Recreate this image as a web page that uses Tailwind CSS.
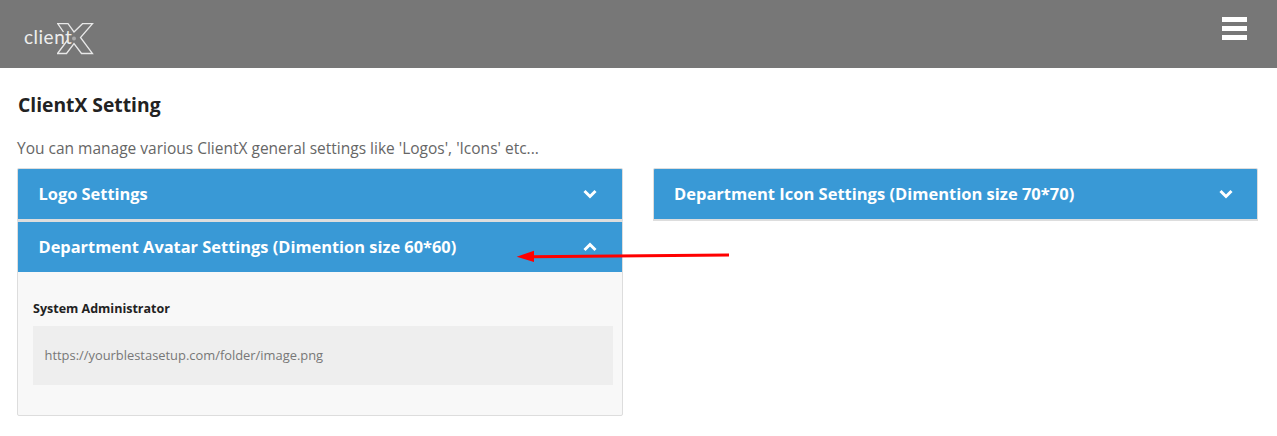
<!doctype html>
<html lang="en">
    <head>
        <meta charset="UTF-8" />
        <meta name="viewport" content="width=device-width, initial-scale=1.0" />
        <title>ClientX Setting</title>
        <script src="https://cdn.jsdelivr.net/npm/@tailwindcss/browser@4"></script>
    </head>
    <body class="relative h-[436px] overflow-hidden bg-white font-['Open_Sans',sans-serif] text-[#222]">
        <!-- Header -->
        <header class="flex h-[68px] items-start justify-between bg-[#777777] pl-6 pr-[30px]">
            <div class="relative mt-[23px] h-[32px] w-[72px]">
                <span class="absolute left-0 top-[2px] font-['Lato',sans-serif] text-[19px] font-normal leading-[24px] tracking-[0.5px] text-[#eeeeee]">client</span>
                <svg class="absolute left-[33px] top-0" width="37" height="32" viewBox="0 0 37 32" fill="none" stroke="#e8e8e8" stroke-width="1.3">
                    <path d="M6.5 9 L0.7 0.7 L11 0.7 L17 9 L25.5 0.7 L35.5 0.7 L23.5 14.5 L35.5 30.5 L24.5 30.5 L17 20.5 L9.5 30.5 L0.5 30.5 L11 16.5" />
                    <circle cx="17" cy="15.5" r="2" fill="#a8a8a8" stroke="none" />
                </svg>
            </div>
            <div class="mt-[17px] flex w-[25px] flex-col gap-[4px]">
                <span class="h-[5px] bg-white"></span>
                <span class="h-[5px] bg-white"></span>
                <span class="h-[5px] bg-white"></span>
            </div>
        </header>

        <main class="px-[17px]">
            <h1 class="mt-[24px] pl-px text-[19.3px] font-bold leading-[26px] text-[#222]">ClientX Setting</h1>
            <p class="mt-[18px] text-[15.5px] leading-[24px] text-[#666]">You can manage various ClientX general settings like 'Logos', 'Icons' etc...</p>

            <div class="mt-[8px] grid grid-cols-[606px_605px] gap-x-[30px]">
                <!-- Left column -->
                <div class="flex flex-col">
                    <div class="flex h-[53px] items-center justify-between rounded-t-[2px] border-x border-t border-b-2 border-[#ddd] bg-[#3999d6] pl-[20.5px] pr-[25px] text-white">
                        <span class="text-[16.4px] font-bold">Logo Settings</span>
                        <svg width="14" height="10" viewBox="0 0 14 10" fill="none" stroke="white" stroke-width="3"><path d="M1.5 2 L7 7.5 L12.5 2" /></svg>
                    </div>
                    <div class="rounded-b-[2px] border border-[#ddd] bg-[#f8f8f8]">
                        <div class="flex h-[50px] items-center justify-between bg-[#3999d6] pl-[20.5px] pr-[25px] text-white">
                            <span class="text-[16.4px] font-bold">Department Avatar Settings (Dimention size 60*60)</span>
                            <svg width="14" height="10" viewBox="0 0 14 10" fill="none" stroke="white" stroke-width="3"><path d="M1.5 8 L7 2.5 L12.5 8" /></svg>
                        </div>
                        <div class="pb-[30px] pl-[15px] pr-[9px] pt-[27px]">
                            <label class="block text-[12.5px] font-bold leading-[20px] text-[#222]">System Administrator</label>
                            <div class="mt-[7px] flex h-[59px] items-center bg-[#eeeeee] pl-[11.5px] text-[12.9px] text-[#777]">https://yourblestasetup.com/folder/image.png</div>
                        </div>
                    </div>
                </div>

                <!-- Right column -->
                <div>
                    <div class="flex h-[53px] items-center justify-between rounded-t-[2px] border-x border-t border-b-2 border-[#ddd] bg-[#3999d6] pl-5 pr-6 text-white">
                        <span class="text-[16.5px] font-bold">Department Icon Settings (Dimention size 70*70)</span>
                        <svg width="14" height="10" viewBox="0 0 14 10" fill="none" stroke="white" stroke-width="3"><path d="M1.5 2 L7 7.5 L12.5 2" /></svg>
                    </div>
                </div>
            </div>
        </main>

        <!-- Annotation arrow -->
        <svg class="absolute left-[515px] top-[248px]" width="218" height="16" viewBox="0 0 218 16" fill="none">
            <path d="M214 7 L15 8.7" stroke="#ff0000" stroke-width="3" />
            <path d="M1.7 8.7 L19 2.7 L19 14 Z" fill="#ff0000" />
        </svg>
    </body>
</html>
